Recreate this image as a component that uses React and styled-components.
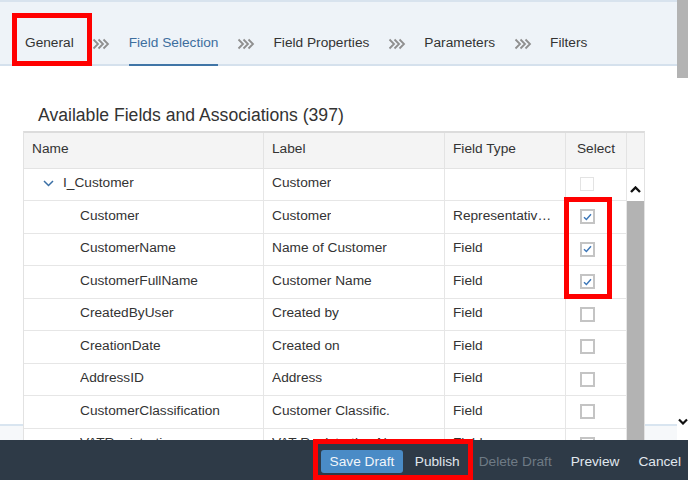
import styled, { createGlobalStyle } from "styled-components"

const steps = ["General", "Field Selection", "Field Properties", "Parameters", "Filters"]

const rows = [
    { name: "I_Customer", label: "Customer", type: "", box: "disabled", group: true },
    { name: "Customer", label: "Customer", type: "Representative Key", box: "checked" },
    { name: "CustomerName", label: "Name of Customer", type: "Field", box: "checked" },
    { name: "CustomerFullName", label: "Customer Name", type: "Field", box: "checked" },
    { name: "CreatedByUser", label: "Created by", type: "Field", box: "off" },
    { name: "CreationDate", label: "Created on", type: "Field", box: "off" },
    { name: "AddressID", label: "Address", type: "Field", box: "off" },
    { name: "CustomerClassification", label: "Customer Classific.", type: "Field", box: "off" },
    { name: "VATRegistration", label: "VAT Registration No.", type: "Field", box: "off" },
]

function Arrows() {
    return (
        <ArrowIcon width="18" height="12" viewBox="0 0 18 12">
            {[1.5, 6.5, 11.5].map((x) => (
                <polyline key={x} points={`${x},1.5 ${x + 4.5},6 ${x},10.5`} fill="none" stroke="#8f8f8f" strokeWidth="1.8" />
            ))}
        </ArrowIcon>
    )
}

function Checkbox({ state }) {
    return (
        <Box $state={state}>
            {state === "checked" && (
                <svg width="9" height="8" viewBox="0 0 9 8">
                    <polyline points="1,4.2 3.4,6.5 8,1.2" fill="none" stroke="#3b76b8" strokeWidth="1.4" />
                </svg>
            )}
        </Box>
    )
}

export default function App() {
    return (
        <>
            <Global />
            <Page>
                <Top>
                    <Main>
                        <Header>
                            {steps.map((s, i) => (
                                <Step key={s}>
                                    {i > 0 && <Arrows />}
                                    <Tab $active={s === "Field Selection"}>{s}</Tab>
                                </Step>
                            ))}
                        </Header>
                        <Body>
                            <Title>Available Fields and Associations (397)</Title>
                            <Table>
                                <Grid>
                                    <HeadCell>Name</HeadCell>
                                    <HeadCell>Label</HeadCell>
                                    <HeadCell>Field Type</HeadCell>
                                    <HeadCell $center>Select</HeadCell>
                                    {rows.map((r) => (
                                        <Row key={r.name}>
                                            <Cell $indent={r.group ? 19 : 56}>
                                                {r.group && (
                                                    <Expand width="11" height="7" viewBox="0 0 11 7">
                                                        <polyline points="1,1 5.5,5.5 10,1" fill="none" stroke="#3a6fa5" strokeWidth="1.5" />
                                                    </Expand>
                                                )}
                                                <Text>{r.name}</Text>
                                            </Cell>
                                            <Cell><Text>{r.label}</Text></Cell>
                                            <Cell $right={10}><Text>{r.type}</Text></Cell>
                                            <Cell $indent={14}><Checkbox state={r.box} /></Cell>
                                        </Row>
                                    ))}
                                </Grid>
                                <ScrollCol>
                                    <ScrollHead />
                                    <ScrollUp>
                                        <svg width="11" height="7" viewBox="0 0 11 7">
                                            <polyline points="1,6 5.5,1.5 10,6" fill="none" stroke="#111" strokeWidth="2.4" />
                                        </svg>
                                    </ScrollUp>
                                    <ScrollThumb />
                                </ScrollCol>
                            </Table>
                        </Body>
                    </Main>
                    <PageScroll>
                        <PageThumb />
                        <PageDown width="10" height="7" viewBox="0 0 10 7">
                            <polyline points="1,1.5 5,5.5 9,1.5" fill="none" stroke="#111" strokeWidth="2.2" />
                        </PageDown>
                    </PageScroll>
                </Top>
                <Footer>
                    <FooterButton $primary>Save Draft</FooterButton>
                    <FooterButton>Publish</FooterButton>
                    <FooterButton $disabled>Delete Draft</FooterButton>
                    <FooterButton>Preview</FooterButton>
                    <FooterButton>Cancel</FooterButton>
                </Footer>

                <Mark $x={12} $y={13} $w={80} $h={53} />
                <Mark $x={564} $y={197} $w={48} $h={102} />
                <Mark $x={313} $y={439} $w={160} $h={41} />
            </Page>
        </>
    )
}

const Global = createGlobalStyle`
    * {
        box-sizing: border-box;
    }
    html, body {
        margin: 0;
        padding: 0;
        background: #fff;
    }
    body {
        font-family: "Liberation Sans", Arial, sans-serif;
        font-size: 13.7px;
        color: #333;
        overflow: hidden;
    }
`

const Page = styled.div`
    position: relative;
    width: 688px;
    height: 480px;
    display: flex;
    flex-direction: column;
    overflow: hidden;
`

const Top = styled.div`
    height: 440px;
    display: flex;
`

const Main = styled.div`
    flex: 1;
    min-width: 0;
    display: flex;
    flex-direction: column;
`

const Header = styled.div`
    height: 66px;
    flex-shrink: 0;
    background: #eef3f8;
    border-top: 2px solid #d8e3ee;
    border-bottom: 2px solid #d5e1ed;
    display: flex;
    align-items: flex-end;
    padding-left: 25px;
`

const Step = styled.div`
    display: flex;
    align-items: center;
    gap: 18.5px;
    margin-right: 18.5px;
    margin-bottom: -2px;
`

const ArrowIcon = styled.svg`
    flex-shrink: 0;
    margin-top: 2px;
`

const Tab = styled.div`
    height: 46px;
    padding-top: 2px;
    line-height: 42px;
    white-space: nowrap;
    color: ${(p) => (p.$active ? "#3d6e9e" : "#333")};
    border-bottom: 2px solid ${(p) => (p.$active ? "#4075a7" : "transparent")};
`

const Body = styled.div`
    flex: 1;
    overflow: hidden;
    padding-top: 38px;
    background: linear-gradient(to bottom, #fff 0 358px, #d9e5f0 358px 360px, #f6f8fa 360px);
`

const Title = styled.h2`
    margin: 0 0 5px 38px;
    font-size: 17.6px;
    line-height: 22px;
    font-weight: normal;
    color: #333;
`

const Table = styled.div`
    margin-left: 23px;
    width: 622px;
    display: flex;
    align-items: flex-start;
    background: #fff;
    border-top: 2px solid #dcdcdc;
    border-left: 1px solid #e2e2e2;
    border-right: 1px solid #e2e2e2;
`

const Grid = styled.div`
    display: grid;
    grid-template-columns: 240px 181px 121px 61px;
    grid-template-rows: 35.5px;
    grid-auto-rows: 32.5px;
`

const Row = styled.div`
    display: contents;
`

const HeadCell = styled.div`
    background: #f4f4f4;
    border-right: 1px solid #e3e3e3;
    border-bottom: 1px solid #e3e3e3;
    display: flex;
    align-items: center;
    justify-content: ${(p) => (p.$center ? "center" : "flex-start")};
    padding: 0 ${(p) => (p.$center ? 0 : 8)}px 4px ${(p) => (p.$center ? 0 : 8)}px;
`

const Cell = styled.div`
    border-right: 1px solid #e6e6e6;
    border-bottom: 1px solid #e6e6e6;
    display: flex;
    align-items: center;
    min-width: 0;
    padding: 0 ${(p) => p.$right ?? 6}px 3px ${(p) => p.$indent ?? 8}px;
`

const Text = styled.span`
    white-space: nowrap;
    overflow: hidden;
    text-overflow: ellipsis;
`

const Expand = styled.svg`
    flex-shrink: 0;
    margin: 2px 9px 0 0;
`

const Box = styled.span`
    width: ${(p) => (p.$state === "disabled" ? 14 : 15)}px;
    height: ${(p) => (p.$state === "disabled" ? 14 : 15)}px;
    margin-top: 3px;
    border: ${(p) => (p.$state === "disabled" ? "1.5px solid #e3e3e3" : "2px solid #c4c4c4")};
    background: #fff;
    display: flex;
    align-items: center;
    justify-content: center;
`

const ScrollCol = styled.div`
    width: 17px;
    align-self: stretch;
    display: flex;
    flex-direction: column;
`

const ScrollHead = styled.div`
    height: 35.5px;
    background: #f4f4f4;
    border-bottom: 1px solid #e3e3e3;
`

const ScrollUp = styled.div`
    height: 32.5px;
    display: flex;
    align-items: flex-end;
    justify-content: center;
    padding-bottom: 8px;
`

const ScrollThumb = styled.div`
    flex: 1;
    background: #b3b3b3;
`

const PageScroll = styled.div`
    width: 11px;
    display: flex;
    flex-direction: column;
    align-items: flex-end;
`

const PageThumb = styled.div`
    width: 11px;
    height: 78px;
    background: #b3b3b3;
`

const PageDown = styled.svg`
    margin-top: auto;
    margin-bottom: 15px;
`

const Footer = styled.div`
    height: 40px;
    background: #2e3a47;
    display: flex;
    justify-content: flex-end;
    align-items: center;
    gap: 5px;
`

const FooterButton = styled.div`
    height: 23px;
    line-height: 23px;
    padding: 0 ${(p) => (p.$primary ? 8.5 : 7)}px;
    border-radius: 3px;
    white-space: nowrap;
    background: ${(p) => (p.$primary ? "#4a8bc6" : "transparent")};
    color: ${(p) => (p.$disabled ? "#6e7a85" : p.$primary ? "#f2f6fa" : "#e0e7ee")};
    margin-top: 2px;
`

const Mark = styled.div`
    position: absolute;
    left: ${(p) => p.$x}px;
    top: ${(p) => p.$y}px;
    width: ${(p) => p.$w}px;
    height: ${(p) => p.$h}px;
    border: 5px solid #ff0000;
    pointer-events: none;
`
